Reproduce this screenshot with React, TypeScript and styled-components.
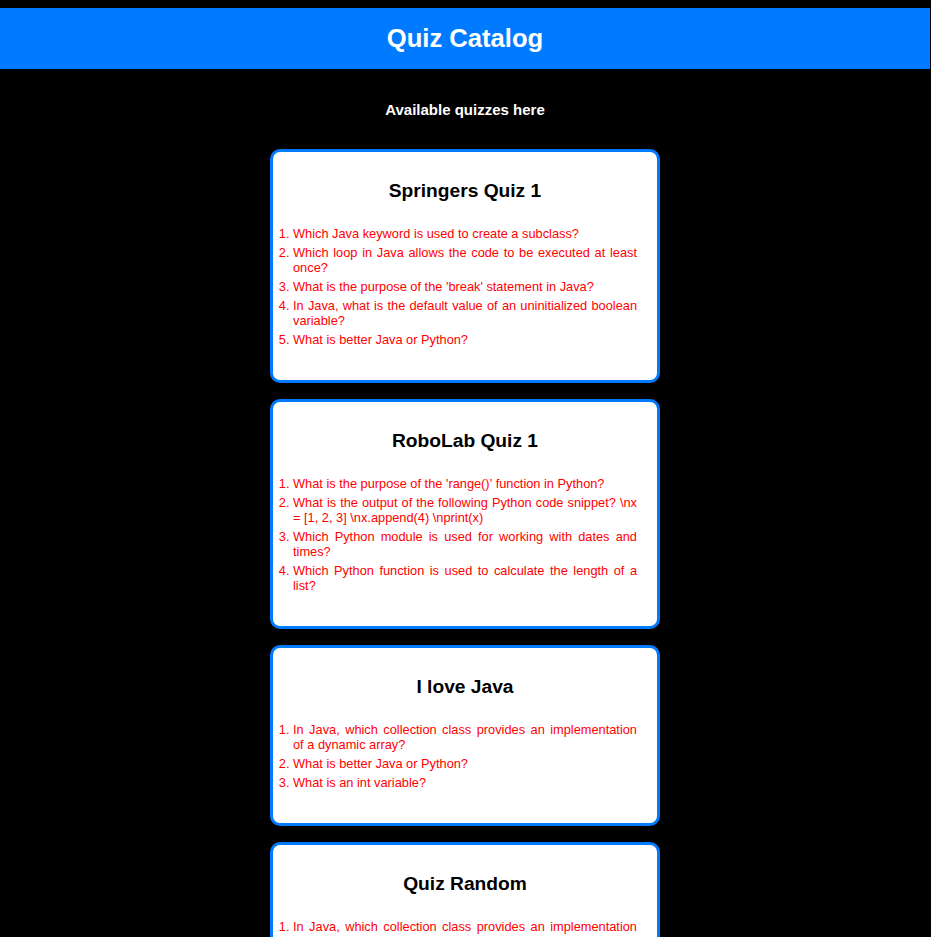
import styled, { createGlobalStyle } from "styled-components";

const quizzes = [
    {
        title: "Springers Quiz 1",
        questions: [
            "Which Java keyword is used to create a subclass?",
            "Which loop in Java allows the code to be executed at least once?",
            "What is the purpose of the 'break' statement in Java?",
            "In Java, what is the default value of an uninitialized boolean variable?",
            "What is better Java or Python?",
        ],
    },
    {
        title: "RoboLab Quiz 1",
        questions: [
            "What is the purpose of the 'range()' function in Python?",
            "What is the output of the following Python code snippet? \\nx = [1, 2, 3] \\nx.append(4) \\nprint(x)",
            "Which Python module is used for working with dates and times?",
            "Which Python function is used to calculate the length of a list?",
        ],
    },
    {
        title: "I love Java",
        questions: [
            "In Java, which collection class provides an implementation of a dynamic array?",
            "What is better Java or Python?",
            "What is an int variable?",
        ],
    },
    {
        title: "Quiz Random",
        questions: [
            "In Java, which collection class provides an implementation of a dynamic array?",
            "What is better Java or Python?",
            "What is an int variable?",
        ],
    },
];

const App = () => {
    return (
        <>
            <GlobalStyle />
            <Header>
                <HeaderTitle>Quiz Catalog</HeaderTitle>
            </Header>
            <Main>
                <Subtitle>Available quizzes here</Subtitle>
                {quizzes.map((quiz) => (
                    <QuizCard key={quiz.title}>
                        <QuizTitle>{quiz.title}</QuizTitle>
                        <QuestionList>
                            {quiz.questions.map((q, i) => (
                                <Question key={i}>{q}</Question>
                            ))}
                        </QuestionList>
                    </QuizCard>
                ))}
            </Main>
        </>
    );
};

export default App;

const GlobalStyle = createGlobalStyle`
    body {
        margin: 0;
        padding: 8px 1px 0 0;
        background-color: #000000;
        font-family: "Liberation Sans", Arial, sans-serif;
    }
`;

const Header = styled.header`
    height: 61px;
    background-color: #007bff;
    display: flex;
    align-items: center;
    justify-content: center;
`;

const HeaderTitle = styled.h1`
    margin: 0;
    color: #ffffff;
    font-size: 25.6px;
    font-weight: bold;
`;

const Main = styled.main`
    display: flex;
    flex-direction: column;
    align-items: center;
    padding-bottom: 20px;
`;

const Subtitle = styled.p`
    margin: 32px 0 31px;
    color: #ffffff;
    font-size: 15px;
    font-weight: bold;
    line-height: 17px;
`;

const QuizCard = styled.div`
    box-sizing: border-box;
    width: 390px;
    margin-bottom: 16px;
    padding: 28px 20px 29px;
    background-color: #ffffff;
    border: 3px solid #007bff;
    border-radius: 10px;
`;

const QuizTitle = styled.h2`
    margin: 0 0 24px;
    text-align: center;
    color: #000000;
    font-size: 19.2px;
    line-height: 22px;
    font-weight: bold;
`;

const QuestionList = styled.ol`
    margin: 0;
    padding: 0;
`;

const Question = styled.li`
    margin-bottom: 4px;
    color: #ff0000;
    font-size: 12.8px;
    line-height: 15px;
    text-align: justify;
`;
